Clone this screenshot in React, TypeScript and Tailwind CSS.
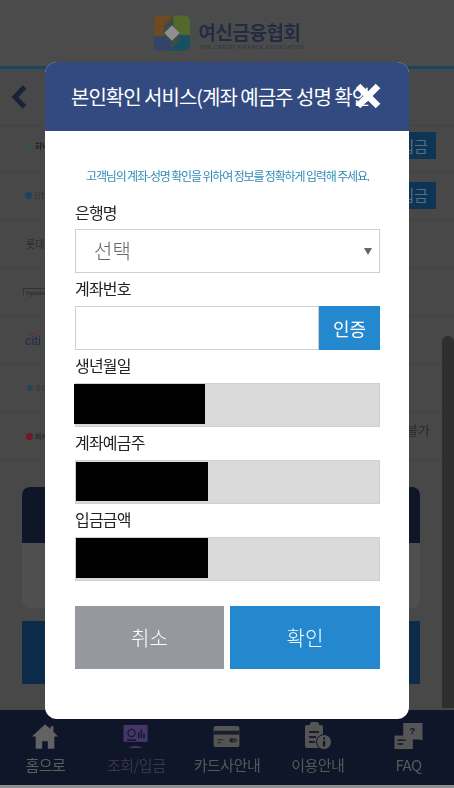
const font = { fontFamily: '"Noto Sans CJK KR", "Noto Sans", sans-serif' };

function Logo() {
  return (
    <svg width="36" height="36" viewBox="0 0 37 36">
      <rect x="0" y="0" width="37" height="36" rx="5" fill="#3f4a4a" />
      <path d="M0 5a5 5 0 0 1 5-5h15L10 11v10H0z" fill="#6d4a22" />
      <path d="M20 0h12a5 5 0 0 1 5 5v15H27L20 10z" fill="#55682c" />
      <path d="M37 20v11a5 5 0 0 1-5 5H16l10-10V20z" fill="#17505f" />
      <path d="M0 21h10l8 7-2 8H5a5 5 0 0 1-5-5z" fill="#34436a" />
      <path d="M18.5 11L25.5 18l-7 7L11.500 18z" fill="#8f8f8f" stroke="#8f8f8f" strokeWidth="1.500" strokeLinejoin="round" />
    </svg>
  );
}

function NavIcon({ kind }: { kind: string }) {
  if (kind === "home")
    return (
      <svg width="28" height="27" viewBox="0 0 30 28">
        <path d="M15 1L1 14h4v13h7v-8h6v8h7V14h4l-5-5V3h-3v3z" fill="#626262" />
      </svg>
    );
  if (kind === "chart")
    return (
      <svg width="28" height="25" viewBox="0 0 30 28">
        <rect x="1" y="1" width="27" height="19" fill="#443768" />
        <circle cx="10" cy="10" r="4" fill="none" stroke="#1b1730" strokeWidth="1.500" />
        <path d="M5 18h10M18 16V9M21 16V6M24 16v-5" stroke="#1b1730" strokeWidth="1.800" />
        <path d="M7 27c2-3 12-3 15 0z" fill="#443768" />
      </svg>
    );
  if (kind === "card")
    return (
      <svg width="28" height="21" viewBox="0 0 28 22">
        <rect x="0" y="0" width="27" height="22" rx="2" fill="#555555" />
        <rect x="0" y="5" width="27" height="4" fill="#1a1d2a" />
        <rect x="4" y="14" width="6" height="1" fill="#222" />
        <rect x="4" y="17" width="4" height="1" fill="#222" />
        <circle cx="19" cy="15" r="2.500" fill="#222" />
        <circle cx="22" cy="15" r="2.500" fill="#333" />
      </svg>
    );
  if (kind === "info")
    return (
      <svg width="28" height="28" viewBox="0 0 28 28">
        <rect x="1" y="3" width="18" height="23" rx="2" fill="#555555" />
        <rect x="6" y="0" width="9" height="5" rx="2" fill="#555555" />
        <path d="M5 10h10M5 15h7M5 20h6" stroke="#1a1d2a" strokeWidth="2" />
        <circle cx="20" cy="20" r="7.500" fill="#555555" stroke="#10162a" strokeWidth="1" />
        <rect x="19" y="19" width="2.200" height="5.500" fill="#10162a" />
        <rect x="19" y="15.500" width="2.200" height="2" fill="#10162a" />
      </svg>
    );
  return (
    <svg width="29" height="27" viewBox="0 0 29 28">
      <rect x="0" y="13" width="19" height="14" fill="#555555" />
      <rect x="3" y="17" width="9" height="1.500" fill="#10162a" />
      <rect x="3" y="21" width="6" height="1.500" fill="#10162a" />
      <path d="M9 0h20v18l-3-1H9z" fill="#555555" />
      <text x="18.500" y="11" fontSize="10" fontWeight="700" textAnchor="middle" fill="#10162a" fontFamily="Liberation Sans">?</text>
    </svg>
  );
}

const rows = ["하나", "신한", "롯데", "Hyun", "citi", "우리", "비씨"];

function BankLogo({ i }: { i: number }) {
  if (i === 0)
    return (
      <div className="flex items-center gap-[3px]">
        <span className="text-[8px] leading-none text-[#2e5a44]">✻</span>
        <span className="text-[8px] font-bold leading-none text-[#222]">하나</span>
      </div>
    );
  if (i === 1)
    return (
      <div className="flex items-center gap-[2px]">
        <span className="h-[7px] w-[7px] rounded-full bg-[#1f4066]" />
        <span className="text-[7px] leading-none text-[#2a3440]">신한</span>
      </div>
    );
  if (i === 2) return <span className="ml-[1px] text-[10px] leading-none text-[#2c2c2c]">롯데</span>;
  if (i === 3)
    return (
      <div className="ml-[-2px] w-[40px] border-t border-l border-[#333] pl-[2px] pt-[1px] text-[5px] leading-none text-[#222]">
        Hyundai
      </div>
    );
  if (i === 4)
    return (
      <span className="relative text-[13px] leading-none text-[#1f2a44]" style={{ fontFamily: "Liberation Sans" }}>
        citi
        <svg className="absolute left-[3px] top-[-2px]" width="12" height="5" viewBox="0 0 12 5">
          <path d="M1 4c3-3 7-3 10 0" fill="none" stroke="#6a2630" strokeWidth="1" />
        </svg>
      </span>
    );
  if (i === 5)
    return (
      <div className="ml-[2px] flex items-center gap-[2px]">
        <span className="h-[6px] w-[6px] rounded-full bg-[#234658]" />
        <span className="text-[7px] leading-none text-[#2a3440]">우리</span>
      </div>
    );
  return (
    <div className="ml-[1px] flex items-center gap-[2px]">
      <span className="h-[7px] w-[7px] rounded-full bg-[#6e1a28]" />
      <span className="text-[7px] font-bold leading-none text-[#2a2a2a]">비씨</span>
    </div>
  );
}

function Background() {
  return (
    <div className="flex h-full flex-col bg-[#484848] blur-[0.5px]">
      <header className="flex h-[66px] items-center justify-center gap-[9px] bg-[#4b4b4b] pl-[1px]">
        <Logo />
        <div className="flex w-[103px] flex-col items-start pt-[3px]">
          <span className="text-[19px] font-bold leading-[24px] tracking-[-0.5px] text-[#232c44]">여신금융협회</span>
          <span className="ml-[2px] whitespace-nowrap text-[5px] leading-[6px] tracking-[0.55px] text-[#2a3248]" style={{ fontFamily: "Liberation Sans" }}>
            THE CREDIT FINANCE ASSOCIATION
          </span>
        </div>
      </header>
      <div className="h-[3px] bg-[#194662]" />
      <div className="flex h-[57px] items-center border-b border-[#424242] pl-[11px]">
        <svg width="16" height="24" viewBox="0 0 16 24">
          <path d="M13.500 2L4 12l9.500 10" fill="none" stroke="#1a2238" strokeWidth="5" />
        </svg>
      </div>
      <div className="flex h-[335px] flex-col">
        {rows.map((r, i) => (
          <div
            key={r}
            className={`flex items-center justify-between border-b border-[#424242] pl-[25px] pr-[18px] ${i === 0 ? "h-[46px] pb-[5px]" : "h-[48.200px]"}`}
          >
            <BankLogo i={i} />
            {i < 2 && (
              <span className="flex h-[27px] w-[40px] items-center justify-end bg-[#0e3556] pr-[8px] text-[15px] text-[#5a6e80]">
                입금
              </span>
            )}
            {i === 6 && <span className="mr-[6px] pb-[14px] text-[13px] text-[#2b2b2b]">불가</span>}
          </div>
        ))}
      </div>
      <div className="flex flex-1 flex-col pl-[22px] pr-[34px] pt-[26px]">
        <div className="flex h-[121px] flex-col overflow-hidden rounded-[8px] bg-[#4f4f4f]">
          <div className="h-[56px] bg-[#0e1628]" />
        </div>
        <div className="mt-[13px] h-[63px] bg-[#0c2c49]" />
      </div>
      <nav className="grid h-[75px] grid-cols-5 items-start bg-[#10162a] pt-[11px]">
        {[
          ["home", "홈으로", "#5f5f5f"],
          ["chart", "조회/입금", "#3a3450"],
          ["card", "카드사안내", "#585858"],
          ["info", "이용안내", "#585858"],
          ["faq", "FAQ", "#585858"],
        ].map(([k, t, c]) => (
          <div key={k} className="flex flex-col items-center">
            <div className="flex h-[30px] items-center justify-center">
              <NavIcon kind={k} />
            </div>
            <span className="mt-[3px] text-[15px] leading-[22px] tracking-[-0.5px]" style={{ color: c }}>
              {t}
            </span>
          </div>
        ))}
      </nav>
      <div className="h-[3px] bg-[#8d8f94]" />
    </div>
  );
}

function Label({ children, first }: { children: string; first?: boolean }) {
  return (
    <div className={`h-[33px] text-[16px] leading-[30px] tracking-[-0.8px] text-[#222222] ${first ? "pt-[1px]" : ""}`}>
      {children}
    </div>
  );
}

function Masked({ cls }: { cls: string }) {
  return (
    <div className="flex h-[44px] items-start border border-[#cfcfcf] bg-[#dadada]">
      <div className={`bg-black ${cls}`} />
    </div>
  );
}

export default function App() {
  return (
    <div className="relative h-[788px] w-[454px] overflow-hidden" style={font}>
      <Background />
      <div className="absolute right-0 top-[336px] h-[372px] w-[12px] rounded-t-[6px] bg-[#2e2e2e]" />
      <div className="absolute left-[45px] top-[62px] flex h-[657px] w-[364px] flex-col overflow-hidden rounded-[12px] bg-white blur-[0.3px]">
        <div className="relative flex h-[69px] items-center bg-[#324a80] pl-[26px]">
          <span className="whitespace-nowrap text-[20px] leading-none tracking-[-1px] text-white">
            본인확인 서비스(계좌 예금주 성명 확인
          </span>
          <svg className="absolute left-[309px] top-[21px]" width="28" height="26" viewBox="0 0 28 26">
            <path d="M4 3l20 20M24 3L4 23" stroke="white" strokeWidth="6.500" />
          </svg>
        </div>
        <div className="flex flex-1 flex-col px-[29px]">
          <p className="mt-[35px] whitespace-nowrap pl-[12px] text-[12px] leading-[20px] tracking-[-1.15px] text-[#2f8bb8]">
            고객님의 계좌-성명 확인을 위하여 정보를 정확하게 입력해 주세요.
          </p>
          <div className="mt-[10px] w-[306px] pl-[1px]">
            <Label first>은행명</Label>
            <div className="flex h-[44px] items-center justify-between border border-[#cfcfcf] pl-[18px] pr-[7px] text-[20px] font-light text-[#666666]">
              <span>선택</span>
              <svg width="8" height="7" viewBox="0 0 8 7">
                <path d="M0 0h8L4 7z" fill="#666666" />
              </svg>
            </div>
            <Label>계좌번호</Label>
            <div className="flex h-[44px]">
              <div className="flex-1 border border-[#cfcfcf]" />
              <div className="flex w-[61px] items-center justify-center bg-[#2488cf] text-[18px] text-white">인증</div>
            </div>
            <Label>생년월일</Label>
            <Masked cls="-ml-[2px] h-[40px] w-[131px]" />
            <Label>계좌예금주</Label>
            <Masked cls="mt-[1px] h-[39px] w-[132px]" />
            <Label>입금금액</Label>
            <Masked cls="h-[40px] w-[132px]" />
            <div className="mt-[25px] flex gap-[6px]">
              <button className="h-[63px] w-[149px] bg-[#95989c] text-[20px] font-light text-white">취소</button>
              <button className="h-[63px] w-[150px] bg-[#2488cf] text-[20px] font-light text-white">확인</button>
            </div>
          </div>
        </div>
      </div>
    </div>
  );
}
